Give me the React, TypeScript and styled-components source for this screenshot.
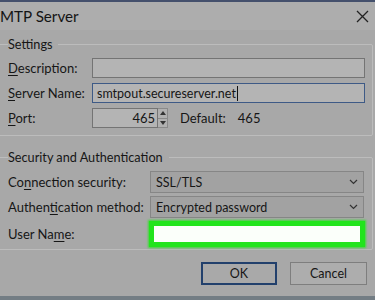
import styled, { createGlobalStyle } from 'styled-components'

const Global = createGlobalStyle`
  html, body {
    margin: 0;
    padding: 0;
    background: #a8a8a8;
  }
  body {
    font-family: Lato, "Noto Sans", sans-serif;
    font-size: 13px;
    color: #161616;
    overflow: hidden;
  }
`

const Window = styled.div`
  width: 383px;
  height: 300px;
  margin-left: -8px;
  box-sizing: border-box;
  display: flex;
  flex-direction: column;
  background: #a8a8a8;
  border-top: 2px solid #44506c;
  border-bottom: 4px solid #737d84;
  overflow: hidden;
`

const TitleBar = styled.div`
  height: 28px;
  display: flex;
  align-items: center;
  justify-content: space-between;
  padding: 0 6px 0 8px;
  background: #adadad;
  flex-shrink: 0;
`

const Title = styled.div`
  font-size: 15.2px;
  color: #141414;
`

const Body = styled.div`
  padding: 5px 2px 0 6px;
  display: flex;
  flex-direction: column;
`

const Group = styled.fieldset<{ $top?: number }>`
  margin: ${(p) => p.$top ?? 0}px 0 0 0;
  padding: ${(p) => (p.$top ? '5px 8px 2px 9px' : '5px 7px 7px 9px')};
  border: 1px solid #bcbcbc;
  border-radius: 2px;
  min-width: 0;
`

const Legend = styled.legend`
  padding: 0 6px 0 0;
  margin-left: 0;
  line-height: 18px;
  font-size: 12.7px;
  color: #161616;
`

const Rows = styled.div<{ $label: number; $gap: number }>`
  display: grid;
  grid-template-columns: ${(p) => p.$label}px 1fr;
  row-gap: ${(p) => p.$gap}px;
  align-items: center;
`

const Label = styled.div`
  white-space: nowrap;
`

const U = styled.span`
  text-decoration: underline;
  text-underline-offset: 2px;
`

const TextBox = styled.div<{ $focus?: boolean }>`
  height: 20px;
  box-sizing: border-box;
  border: 1px solid ${(p) => (p.$focus ? '#3e5a86' : '#747474')};
  background: #b4b4b4;
  display: flex;
  align-items: center;
  padding: 0 4px;
  font-size: 12.5px;
`

const Caret = styled.span`
  display: inline-block;
  width: 1px;
  height: 15px;
  background: #111;
  margin-left: 1px;
`

const PortRow = styled.div`
  display: flex;
  align-items: center;
`

const PortBox = styled(TextBox)`
  width: 66px;
  justify-content: flex-end;
  padding-right: 2px;
  font-size: 13px;
`

const Spinner = styled.div`
  width: 10px;
  height: 20px;
  box-sizing: border-box;
  border: 1px solid #8a8a8a;
  border-left: none;
  display: flex;
  flex-direction: column;
  background: #b0b0b0;
`

const SpinHalf = styled.div`
  flex: 1;
  display: flex;
  align-items: center;
  justify-content: center;
  & + & {
    border-top: 1px solid #8a8a8a;
  }
`

const DefaultText = styled.span`
  margin-left: 12px;
`

const DefaultValue = styled.span`
  margin-left: 12px;
`

const Select = styled.div`
  height: 22px;
  box-sizing: border-box;
  border: 1px solid #868686;
  background: #a2a2a2;
  display: flex;
  align-items: center;
  justify-content: space-between;
  padding: 0 5px 0 5px;
  font-size: 12.5px;
`

const Highlight = styled.div`
  height: 26px;
  box-sizing: border-box;
  border: 5px solid #22e41c;
  background: #fbfffa;
  box-shadow: 0 0 2px 1px #3fd83a;
  margin-right: -1px;
  margin-left: -1px;
`

const Buttons = styled.div`
  display: flex;
  justify-content: flex-end;
  gap: 13px;
  margin-top: 12px;
  padding-right: 6px;
`

const Button = styled.div<{ $default?: boolean }>`
  width: ${(p) => (p.$default ? 76 : 77)}px;
  height: 23px;
  box-sizing: border-box;
  display: flex;
  align-items: center;
  justify-content: center;
  font-size: 12.5px;
  background: ${(p) => (p.$default ? '#a9a9a9' : '#adadad')};
  border: ${(p) => (p.$default ? '2px solid #22406c' : '1px solid #7e7e7e')};
`

const Chevron = () => (
  <svg width="9" height="6" viewBox="0 0 9 6">
    <path d="M1 1 L4.5 4.5 L8 1" fill="none" stroke="#333" strokeWidth="1.2" />
  </svg>
)

const Arrow = ({ up }: { up?: boolean }) => (
  <svg width="6" height="4" viewBox="0 0 6 4">
    <path d={up ? 'M0 4 L3 0 L6 4 Z' : 'M0 0 L3 4 L6 0 Z'} fill="#333" />
  </svg>
)

export default function App() {
  return (
    <>
      <Global />
      <Window>
        <TitleBar>
          <Title>MTP Server</Title>
          <svg width="13" height="13" viewBox="0 0 13 13">
            <path d="M1 1 L12 12 M12 1 L1 12" stroke="#222" strokeWidth="1.3" />
          </svg>
        </TitleBar>
        <Body>
          <Group>
            <Legend>Settings</Legend>
            <Rows $label={84} $gap={5}>
              <Label>
                <U>D</U>escription:
              </Label>
              <TextBox />
              <Label>
                <U>S</U>erver Name:
              </Label>
              <TextBox $focus>
                smtpout.secureserver.net
                <Caret />
              </TextBox>
              <Label>
                <U>P</U>ort:
              </Label>
              <PortRow>
                <PortBox>465</PortBox>
                <Spinner>
                  <SpinHalf>
                    <Arrow up />
                  </SpinHalf>
                  <SpinHalf>
                    <Arrow />
                  </SpinHalf>
                </Spinner>
                <DefaultText>Default:</DefaultText>
                <DefaultValue>465</DefaultValue>
              </PortRow>
            </Rows>
          </Group>
          <Group $top={12}>
            <Legend>Security and Authentication</Legend>
            <Rows $label={142} $gap={3}>
              <Label>
                Co<U>n</U>nection security:
              </Label>
              <Select>
                SSL/TLS
                <Chevron />
              </Select>
              <Label>
                Authen<U>t</U>ication method:
              </Label>
              <Select>
                Encrypted password
                <Chevron />
              </Select>
              <Label>
                User Na<U>m</U>e:
              </Label>
              <Highlight />
            </Rows>
          </Group>
          <Buttons>
            <Button $default>OK</Button>
            <Button>Cancel</Button>
          </Buttons>
        </Body>
      </Window>
    </>
  )
}
